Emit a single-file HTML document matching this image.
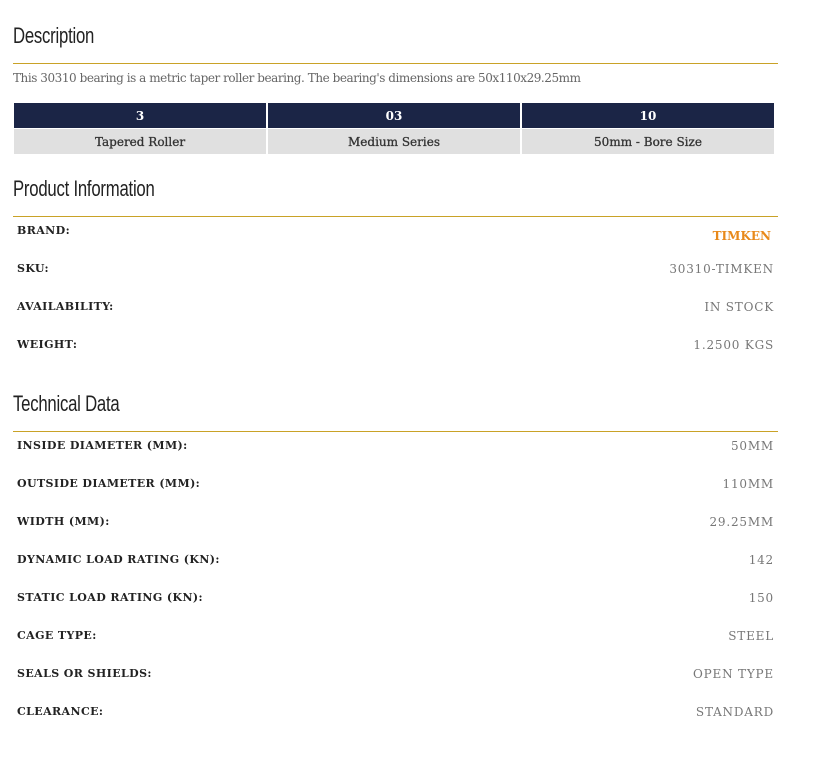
<!DOCTYPE html>
<html><head><style>
body{margin:0;background:#fff;font-family:"DejaVu Serif","Liberation Serif",serif;}
.h{position:absolute;left:13px;font-family:"Liberation Sans",sans-serif;font-size:22px;color:#222;transform:scaleX(.76);transform-origin:left;letter-spacing:-.3px}
.line{position:absolute;left:13px;width:765px;height:1px;background:#c9a227;z-index:5}
.d{position:absolute;left:13px;top:71px;font-size:12px;color:#666;letter-spacing:-.45px}
table{position:absolute;left:13px;top:102px;width:764px;border-collapse:separate;border-spacing:2px 1px;margin-left:-1px;table-layout:fixed}
td{text-align:center;font-size:12px;font-weight:bold;height:25px;padding:0}
.t1 td{background:#1b2546;color:#fff}
.t2 td{background:#e0e0e0;color:#333;font-weight:normal;-webkit-text-stroke:.3px #333}
.r{position:absolute;left:17px;width:757px;font-size:11px}
.r b{position:absolute;left:0;letter-spacing:.4px;color:#222}
.r span{position:absolute;right:0;color:#777;letter-spacing:.8px;font-size:12px}
</style></head><body>
<div class="h" style="top:23px">Description</div>
<div class="d">This 30310 bearing is a metric taper roller bearing. The bearing's dimensions are 50x110x29.25mm</div>
<table><tr class="t1"><td>3</td><td>03</td><td>10</td></tr>
<tr class="t2"><td>Tapered Roller</td><td>Medium Series</td><td>50mm - Bore Size</td></tr></table>
<div class="h" style="top:176px">Product Information</div>
<div class="r" style="top:224px"><b>BRAND:</b><span style="top:5px;right:3px;color:#e8891a;font-weight:bold;letter-spacing:0">TIMKEN</span></div>
<div class="r" style="top:262px"><b>SKU:</b><span>30310-TIMKEN</span></div>
<div class="r" style="top:300px"><b>AVAILABILITY:</b><span>IN STOCK</span></div>
<div class="r" style="top:338px"><b>WEIGHT:</b><span>1.2500 KGS</span></div>
<div class="h" style="top:391px">Technical Data</div>
<div class="r" style="top:439px"><b>INSIDE DIAMETER (MM):</b><span>50MM</span></div>
<div class="r" style="top:477px"><b>OUTSIDE DIAMETER (MM):</b><span>110MM</span></div>
<div class="r" style="top:515px"><b>WIDTH (MM):</b><span>29.25MM</span></div>
<div class="r" style="top:553px"><b>DYNAMIC LOAD RATING (KN):</b><span>142</span></div>
<div class="r" style="top:591px"><b>STATIC LOAD RATING (KN):</b><span>150</span></div>
<div class="r" style="top:629px"><b>CAGE TYPE:</b><span>STEEL</span></div>
<div class="r" style="top:667px"><b>SEALS OR SHIELDS:</b><span>OPEN TYPE</span></div>
<div class="r" style="top:705px"><b>CLEARANCE:</b><span>STANDARD</span></div>
<div class="line" style="top:63px"></div>
<div class="line" style="top:216px"></div>
<div class="line" style="top:431px"></div>
</body></html>
